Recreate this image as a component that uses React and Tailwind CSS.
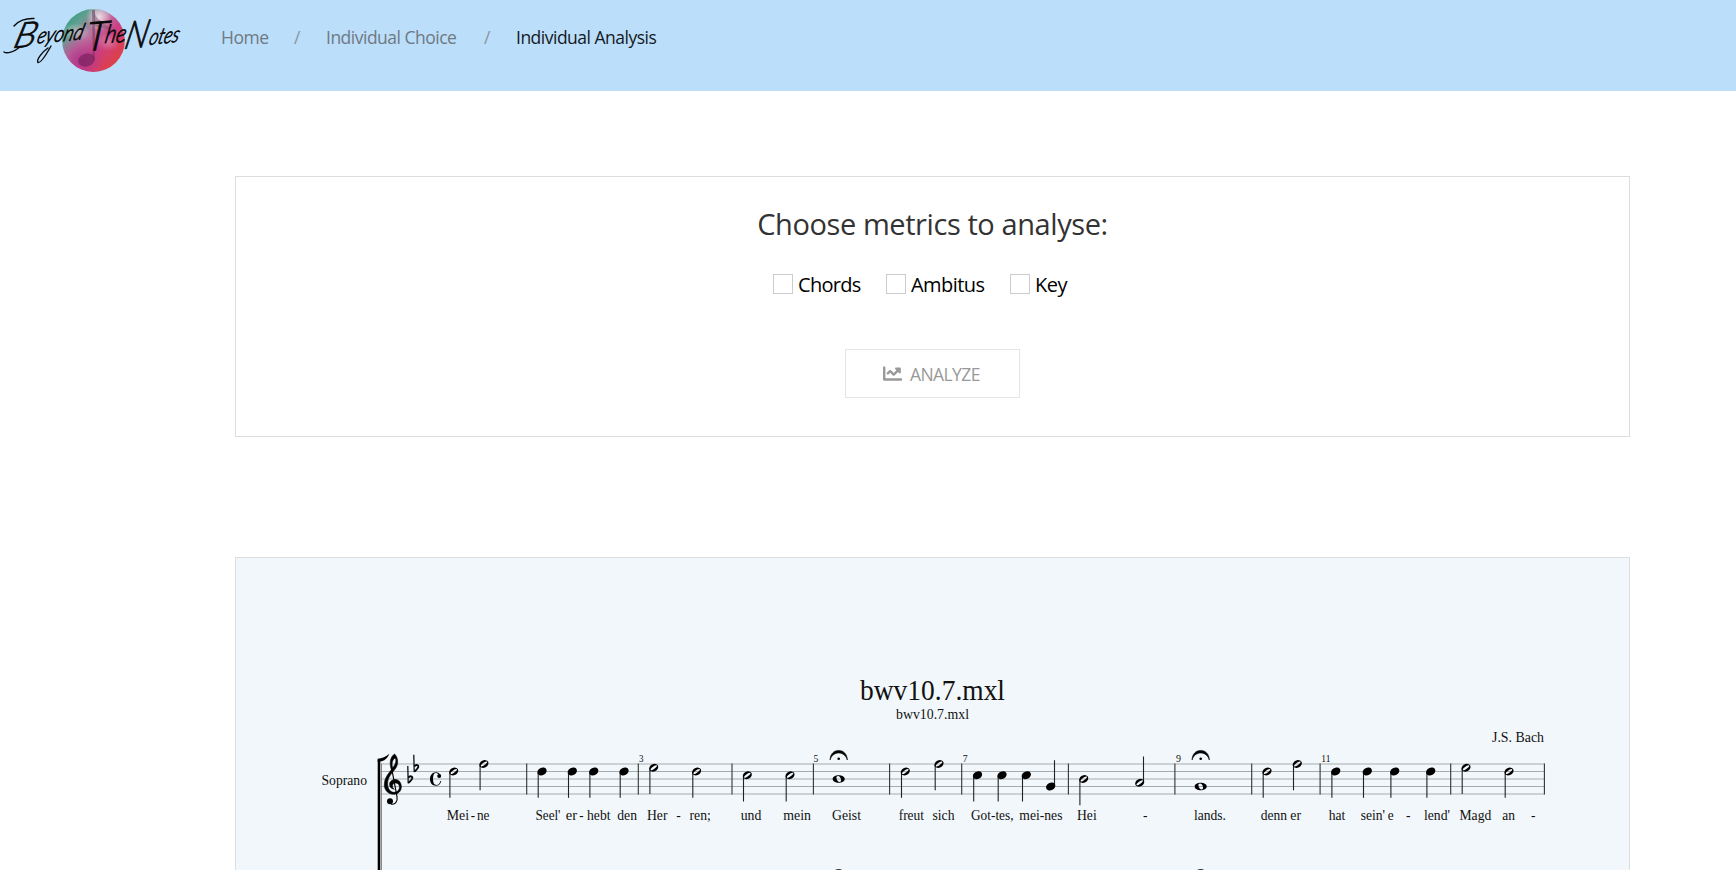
import React from "react";
import { FaChartLine } from "react-icons/fa";

const SERIF = '"Liberation Serif", serif';

// kind, centre x, centre y, stem direction
const NOTES = [
  ["h", 453.7, 771.5], ["h", 483.9, 764],
  ["q", 542, 771.5], ["q", 572.3, 771.5], ["q", 593.7, 771.5], ["q", 624, 771.5],
  ["h", 653.7, 767.75], ["h", 696.6, 771.5],
  ["h", 747.3, 775.25], ["h", 790, 775.25],
  ["w", 838.7, 779],
  ["h", 905.3, 771.5], ["h", 939, 764],
  ["q", 977.5, 775.25], ["q", 1002, 775.25], ["q", 1026.3, 775.25], ["q", 1050.7, 786.5, "up"],
  ["h", 1083.7, 779], ["h", 1139.7, 782.75, "up"],
  ["w", 1200.7, 786.5],
  ["h", 1267, 771.5], ["h", 1297.3, 764],
  ["q", 1335.7, 771.5], ["q", 1367.3, 771.5], ["q", 1394.7, 771.5], ["q", 1430.7, 771.5],
  ["h", 1466, 767.75], ["h", 1509, 771.5],
];

const BARS = [526.7, 638.3, 732, 813.4, 889.6, 961.7, 1068.4, 1174.9, 1251.7, 1320.1, 1450.7, 1544.4];

// text, left, right
const LYRICS = [
  ["Mei", 446.7, 469], ["-", 470.7, 475], ["ne", 477, 489.5],
  ["Seel'", 535.5, 560.5], ["er", 565.7, 577], ["-", 579.3, 583.6], ["hebt", 587, 610.5], ["den", 617.3, 637],
  ["Her", 647, 667.5], ["-", 676.3, 680.8], ["ren;", 689.5, 710.8],
  ["und", 740.7, 761.3], ["mein", 783.3, 811], ["Geist", 832, 861],
  ["freut", 898.7, 924], ["sich", 932.5, 954.5], ["Got-tes,", 971, 1013.5], ["mei-nes", 1019.3, 1062.5],
  ["Hei", 1077, 1096.7], ["-", 1143, 1147.5],
  ["lands.", 1194, 1226], ["denn", 1260.7, 1287], ["er", 1290.3, 1301],
  ["hat", 1328.7, 1345.3], ["sein'", 1360.7, 1385], ["e", 1387.7, 1393.6], ["-", 1406, 1410.5],
  ["lend'", 1424, 1450], ["Magd", 1459.5, 1491.3], ["an", 1502.3, 1515], ["-", 1531, 1535.5],
];

function Fit({ x, to, y, size, children, ...rest }) {
  return (
    <text x={x} y={y} fontSize={size} fontFamily={SERIF} textLength={to - x} lengthAdjust="spacingAndGlyphs" {...rest}>
      {children}
    </text>
  );
}

function Note({ kind, x, y, up }) {
  if (kind === "w") {
    return (
      <g transform={`translate(${x} ${y})`}>
        <path fillRule="evenodd" d="M-6 0C-6-5 6-5 6 0C6 5-6 5-6 0ZM-2.3-1.6C-2.3 1.2-.4 3.1 1.2 3C3.4 2.6 2.5-2.8-.8-3.1C-1.9-3-2.3-2.4-2.3-1.6Z" />
      </g>
    );
  }
  const sx = up ? x + 3.8 : x - 3.8;
  return (
    <g>
      <path d={up ? `M${sx} ${y - 1}V${y - 26.3}` : `M${sx} ${y + 1}V${y + 26.3}`} stroke="#222" strokeWidth="1.1" />
      <g transform={`translate(${x} ${y}) rotate(-28)`}>
        {kind === "q" ? (
          <ellipse rx="4.9" ry="3.7" />
        ) : (
          <path fillRule="evenodd" d="M-4.8 0A4.8 3.6 0 1 1 4.8 0A4.8 3.6 0 1 1-4.8 0ZM-3.9.5C-3.5 2.2 3.9 1.1 3.9-.5C3.5-2.2-3.9-1.1-3.9.5Z" />
        )}
      </g>
    </g>
  );
}

function Fermata({ x, y }) {
  return (
    <g transform={`translate(${x} ${y})`}>
      <path d="M-8.6 0C-8.6-12.8 8.6-12.8 8.6 0C6.2-9.3-6.2-9.3-8.6 0Z" stroke="#000" strokeWidth=".6" />
      <circle cy="-1.2" r="1.3" />
    </g>
  );
}

function Clef() {
  return (
    <g transform="translate(310 730) scale(.3333)">
      <path
        fillRule="evenodd"
        stroke="#000"
        strokeWidth="1.6"
        d="M254 72C265 84 267 103 255 118C243 133 234 142 233 159C232 174 240 187 252 187C263 187 270 178 268 168C265 157 252 157 248 164C246 170 248 174 253 178C241 176 236 166 240 157C247 143 273 145 274 168C275 183 265 193 250 193C233 192 222 179 223 162C224 143 234 132 244 119C237 98 241 80 254 72ZM256 84C248 88 244 99 248 113C256 104 260 93 256 84Z"
      />
      <path d="M245 115L261 200C264 216 255 225 243 222" fill="none" stroke="#000" strokeWidth="3.4" />
      <circle cx="240" cy="214" r="9" />
    </g>
  );
}

function Flat({ x, y }) {
  return (
    <g transform={`translate(${x} ${y})`} fill="none" stroke="#000">
      <path d="M-.2-13L.2 4.2" strokeWidth="1.2" />
      <path d="M.3-1.4C2-3.4 4.6-3.1 4.3-.8C4 1 2 2.6.3 4" strokeWidth="1.8" />
    </g>
  );
}

function CommonTime({ x, y }) {
  return (
    <g transform={`translate(${x} ${y})`}>
      <path d="M4.9-3.6C3.9-5.7 2.4-6.8.4-6.8C-3.3-6.8-5.7-4-5.7.1C-5.7 4.2-3.4 6.8.2 6.8C3 6.8 5 5 5.5 2L4.7 1.9C4 4.4 2.6 5.9.8 5.9C-1.6 5.9-2.7 4-2.7 0C-2.7-4-1.7-6-.2-6C.9-6 2-5.6 2.6-4.9Z" />
      <circle cx="3.5" cy="-3" r="2" />
    </g>
  );
}

function Score() {
  return (
    <svg className="block h-[312px] w-full" viewBox="236 558 1393 312" fill="#000">
      <g fill="#111">
        <Fit x={860} to={1005} y={700} size={29}>bwv10.7.mxl</Fit>
        <Fit x={896} to={969} y={719} size={14.6}>bwv10.7.mxl</Fit>
        <Fit x={1492} to={1544} y={742} size={14.6}>J.S. Bach</Fit>
        <Fit x={321.5} to={367} y={785.3} size={14.6}>Soprano</Fit>
        {LYRICS.map(([t, a, b], i) => (
          <Fit key={i} x={a} to={b} y={820} size={14.6}>{t}</Fit>
        ))}
        <Fit x={639} to={643.5} y={761.8} size={10.5}>3</Fit>
        <Fit x={813.6} to={818.4} y={761.8} size={10.5}>5</Fit>
        <Fit x={962.8} to={967.6} y={761.8} size={10.5}>7</Fit>
        <Fit x={1176} to={1181} y={761.8} size={10.5}>9</Fit>
        <Fit x={1321.3} to={1330.5} y={761.8} size={10.5}>11</Fit>
      </g>
      <path d="M380.5 764H1544.5M380.5 771.5H1544.5M380.5 779H1544.5M380.5 786.5H1544.5M380.5 794H1544.5" stroke="#a8abad" />
      {BARS.map((x) => (
        <path key={x} d={`M${x} 763.5V794.5`} stroke="#333" strokeWidth="1.1" />
      ))}
      <path d="M379 759.5V870" stroke="#000" strokeWidth="2.6" />
      <path d="M381.5 763.5V870" stroke="#888" strokeWidth="1" />
      <path d="M377.7 762V758.7C382 758.3 386 757 389.3 753.7C387.5 758.5 384 761 380.3 761.6Z" />
      <Clef />
      <Flat x={408} y={779} />
      <Flat x={414} y={767.75} />
      <CommonTime x={435.7} y={779} />
      {NOTES.map(([kind, x, y, dir]) => (
        <Note key={x} kind={kind} x={x} y={y} up={dir === "up"} />
      ))}
      <Fermata x={838.7} y={760} />
      <Fermata x={1200.7} y={760} />
      <Fermata x={838.7} y={879.2} />
      <Fermata x={1200.7} y={879.2} />
    </svg>
  );
}

function Logo() {
  return (
    <svg className="block h-[80px] w-[190px] shrink-0" viewBox="0 0 190 80">
      <defs>
        <linearGradient id="wash" x1="0" y1="0.1" x2="0.9" y2="0.9">
          <stop offset="0" stopColor="#2f9c7c" />
          <stop offset=".22" stopColor="#5f9f90" />
          <stop offset=".42" stopColor="#b9779f" />
          <stop offset=".65" stopColor="#cc3f83" />
          <stop offset="1" stopColor="#e2403a" />
        </linearGradient>
        <radialGradient id="light">
          <stop offset="0" stopColor="#f3dfea" stopOpacity=".95" />
          <stop offset="1" stopColor="#f3dfea" stopOpacity="0" />
        </radialGradient>
        <radialGradient id="plum">
          <stop offset="0" stopColor="#b0358c" stopOpacity=".9" />
          <stop offset="1" stopColor="#b0358c" stopOpacity="0" />
        </radialGradient>
        <clipPath id="disc"><circle cx="93.5" cy="40.5" r="31.4" /></clipPath>
      </defs>
      <g clipPath="url(#disc)">
        <rect x="62" y="9" width="63" height="63" fill="url(#wash)" />
        <circle cx="80" cy="60" r="24" fill="url(#plum)" />
        <ellipse cx="99" cy="17" rx="13" ry="14" fill="url(#light)" />
        <ellipse cx="76" cy="32" rx="14" ry="9" fill="url(#light)" opacity=".55" />
        <ellipse cx="108" cy="42" rx="12" ry="9" fill="url(#light)" opacity=".35" />
        <path d="M92 10L95 10L94.5 60H93Z" fill="#5d2f55" opacity=".5" />
        <path d="M94 12C97 22 107 22 110 30C104 27 97 28 94 25Z" fill="#6a4260" opacity=".4" />
        <ellipse cx="86.5" cy="60" rx="8.5" ry="6.5" transform="rotate(-20 86.5 60)" fill="#74215c" opacity=".65" />
      </g>
      <g className="font-['Lato',sans-serif] font-light italic" fill="#0a0a0a" stroke="#0a0a0a" strokeWidth=".8">
        <text transform="translate(12 48) rotate(-4) skewX(-20)" fontSize="35" textLength="22" lengthAdjust="spacingAndGlyphs">B</text>
        <text transform="translate(36 43.5) rotate(-5) skewX(-20)" fontSize="22" textLength="46" lengthAdjust="spacingAndGlyphs">eyond</text>
        <text transform="translate(85 51) rotate(-4) skewX(-10)" fontSize="40" textLength="22" lengthAdjust="spacingAndGlyphs">T</text>
        <text transform="translate(104 43) rotate(-3) skewX(-14)" fontSize="25" textLength="21" lengthAdjust="spacingAndGlyphs">he</text>
        <text transform="translate(123 49) rotate(-5) skewX(-18)" fontSize="38" textLength="23" lengthAdjust="spacingAndGlyphs">N</text>
        <text transform="translate(148 45) rotate(-6) skewX(-20)" fontSize="22" textLength="30" lengthAdjust="spacingAndGlyphs">otes</text>
      </g>
      <g fill="none" stroke="#0a0a0a" strokeLinecap="round" strokeWidth="1.4">
        <path d="M4 52C7 54 14 52 20 47" />
        <path d="M14 26C18 21 26 18 34 18.5" />
        <path d="M48 48C42 52 36 60 38 62.5C41 63 46 55 51 46" />
      </g>
    </svg>
  );
}

function Metric({ label, className }) {
  return (
    <label className="flex items-center">
      <span className="size-5 border border-[#ccc] bg-white" />
      <span className={`ml-[5px] block pt-[2px] text-[20px] leading-[30px] whitespace-nowrap text-black ${className}`}>{label}</span>
    </label>
  );
}

export default function App() {
  return (
    <div className="h-[870px] w-full overflow-hidden bg-white font-['Open_Sans',sans-serif]">
      <header className="flex h-[91px] items-start bg-[#bbdefb]">
        <Logo />
        <nav className="ml-[31px] flex pt-[22px] text-[17.5px] leading-[30px] font-normal tracking-[-0.5px] whitespace-nowrap text-[#6f7981]">
          <span className="w-[73px]">Home</span>
          <span className="w-[32px] text-[#8d959b]">/</span>
          <span className="w-[158px]">Individual Choice</span>
          <span className="w-[32px] text-[#8d959b]">/</span>
          <span className="text-[#15191c]">Individual Analysis</span>
        </nav>
      </header>

      <main className="ml-[235px] w-[1395px]">
        <section className="mt-[85px] flex h-[261px] flex-col items-center border border-[#ddd]">
          <h3 className="mt-[26px] text-[29px] leading-[42px] font-normal tracking-[-0.42px] whitespace-nowrap text-[#333]">
            Choose metrics to analyse:
          </h3>
          <div className="mt-[24px] flex h-[30px] w-[319px] items-center">
            <Metric label="Chords" className="w-[88px] tracking-[-0.7px]" />
            <Metric label="Ambitus" className="w-[99px] tracking-[-0.55px]" />
            <Metric label="Key" className="tracking-[-0.5px]" />
          </div>
          <button className="mt-[50px] flex h-[49px] w-[175px] items-center border border-[#e5e5e5] pl-[37px] text-[#999]">
            <FaChartLine className="size-[19px]" />
            <span className="ml-[8px] pt-[2px] text-[17.5px] tracking-[-0.6px]">ANALYZE</span>
          </button>
        </section>

        <section className="mt-[120px] h-[400px] border border-[#ddd] bg-[#f1f7fb]">
          <Score />
        </section>
      </main>
    </div>
  );
}
